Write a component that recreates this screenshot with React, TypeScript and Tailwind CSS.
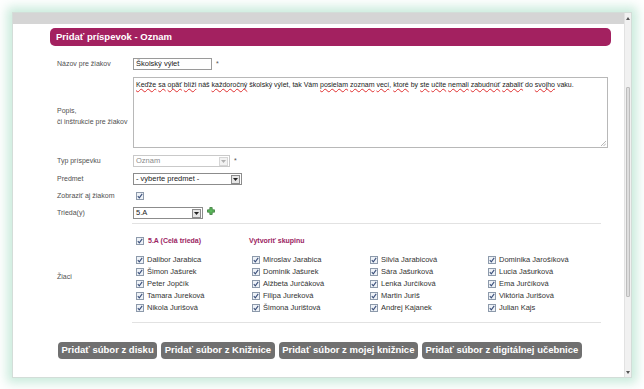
import React from 'react';

const font = { fontFamily: '"Liberation Sans", Arial, sans-serif' };

// Malý zaškrtnutý checkbox
function Check() {
  return (
    <svg width="8" height="8" viewBox="0 0 8 8" className="shrink-0">
      <rect x="0.5" y="0.5" width="7" height="7" fill="#eef2f7" stroke="#8d9aab" />
      <path d="M1.8 4.2 L3.3 5.8 L6.2 1.9" fill="none" stroke="#3b4f7a" strokeWidth="1.1" />
    </svg>
  );
}

function SelectBox({ value, width, disabled }: { value: string; width: string; disabled?: boolean }) {
  return (
    <div
      className={`${width} h-[12px] flex items-center justify-between border bg-white ${
        disabled ? 'border-[#c9c9c9] text-[#8a8a8a]' : 'border-[#8c8c8c] text-[#222]'
      }`}
    >
      <span className="pl-[2px] text-[7.5px] leading-none">{value}</span>
      <span
        className={`w-[9px] h-[9px] mr-[1px] flex items-center justify-center border ${
          disabled ? 'border-[#d6d6d6] bg-[#f2f2f2]' : 'border-[#8c8c8c] bg-[#e6e6e6]'
        }`}
      >
        <svg width="5" height="3" viewBox="0 0 5 3">
          <path d="M0 0 L5 0 L2.5 3 Z" fill={disabled ? '#b0b0b0' : '#222'} />
        </svg>
      </span>
    </div>
  );
}

// Slovo podčiarknuté kontrolou pravopisu
function Sp({ children }: { children: React.ReactNode }) {
  return <span className="underline decoration-wavy decoration-[#e03030] decoration-[0.5px] underline-offset-[1px]">{children}</span>;
}

const students = [
  ['Dalibor Jarabica', 'Miroslav Jarabica', 'Silvia Jarabicová', 'Dominika Jarošíková'],
  ['Šimon Jašurek', 'Dominik Jašurek', 'Sára Jašurková', 'Lucia Jašurková'],
  ['Peter Jopčík', 'Alžbeta Jurčáková', 'Lenka Jurčíková', 'Ema Jurčíková'],
  ['Tamara Jureková', 'Filipa Jureková', 'Martin Juriš', 'Viktória Jurišová'],
  ['Nikola Jurišová', 'Šimona Jurištová', 'Andrej Kajanek', 'Julian Kajs'],
];

const buttons = [
  'Pridať súbor z disku',
  'Pridať súbor z Knižnice',
  'Pridať súbor z mojej knižnice',
  'Pridať súbor z digitálnej učebnice',
];

export default function App() {
  return (
    <div className="w-[644px] h-[389px] bg-white pt-[12px] pl-[12px]" style={font}>
      <div className="w-[620px] h-[366px] flex bg-white border border-[#d3ddd8] shadow-[0_0_10px_5px_rgba(150,215,185,0.5)]">
        {/* Obsah */}
        <div className="flex-1 flex flex-col">
          <div className="h-[11px] bg-[#d5d5d5]" />

          <div className="pl-[37px] pr-[13px] pt-[4px]">
            <div className="h-[18px] rounded-[5px] bg-[#a32160] flex items-center pl-[6px]">
              <span className="text-white font-bold text-[9.5px]">Pridať príspevok - Oznam</span>
            </div>
          </div>

          <div className="pl-[44px] pr-[16px] text-[7px] text-[#505050]">
            {/* Názov */}
            <div className="flex items-center h-[12px] mt-[12px]">
              <div className="w-[76px]">Názov pre žiakov</div>
              <div className="w-[79px] h-[12px] border border-[#9a9a9a] flex items-center pl-[2px] text-[#222] text-[7.5px]">
                Školský výlet
              </div>
              <span className="ml-[4px] text-[#555]">*</span>
            </div>

            {/* Popis */}
            <div className="flex items-center h-[71px] mt-[7px]">
              <div className="w-[76px] leading-[11px] pt-[6px]">
                Popis,
                <br />
                či inštrukcie pre žiakov
              </div>
              <div className="relative w-[475px] h-[71px] border border-[#b8b8b8] px-[2px] pt-[2px] text-[#222] leading-[10px]">
                <Sp>Keďže</Sp> <Sp>sa</Sp> <Sp>opäť</Sp> <Sp>blíži</Sp> náš <Sp>každoročný</Sp> školský výlet, tak Vám{' '}
                <Sp>posielam</Sp> <Sp>zoznam</Sp> <Sp>vecí</Sp>, <Sp>ktoré</Sp> by <Sp>ste</Sp> <Sp>učite</Sp>{' '}
                <Sp>nemali</Sp> <Sp>zabudnúť</Sp> <Sp>zabaliť</Sp> do <Sp>svojho</Sp> vaku.
                <svg width="6" height="6" viewBox="0 0 6 6" className="absolute right-[1px] bottom-[1px]">
                  <path d="M6 1 L1 6 M6 3.5 L3.5 6" stroke="#9a9a9a" strokeWidth="0.7" />
                </svg>
              </div>
            </div>

            {/* Typ príspevku */}
            <div className="flex items-center h-[12px] mt-[7px]">
              <div className="w-[76px]">Typ príspevku</div>
              <SelectBox value="Oznam" width="w-[97px]" disabled />
              <span className="ml-[4px] text-[#555]">*</span>
            </div>

            {/* Predmet */}
            <div className="flex items-center h-[12px] mt-[6px]">
              <div className="w-[76px]">Predmet</div>
              <SelectBox value="- vyberte predmet -" width="w-[109px]" />
            </div>

            {/* Zobraziť */}
            <div className="flex items-center h-[12px] mt-[5px]">
              <div className="w-[76px]">Zobraziť aj žiakom</div>
              <div className="pl-[3px]">
                <Check />
              </div>
            </div>

            {/* Trieda */}
            <div className="flex items-center h-[12px] mt-[5px]">
              <div className="w-[76px]">Trieda(y)</div>
              <SelectBox value="5.A" width="w-[70px]" />
              <svg width="8" height="8" viewBox="0 0 8 8" className="ml-[4px] -mt-[4px]">
                <path
                  d="M2.8 0.5 H5.2 V2.8 H7.5 V5.2 H5.2 V7.5 H2.8 V5.2 H0.5 V2.8 H2.8 Z"
                  fill="#5cb85c"
                  stroke="#2f6f2f"
                  strokeWidth="0.7"
                />
              </svg>
            </div>

            <div className="ml-[75px] w-[469px] h-px bg-[#e2e2e2] mt-[4px]" />

            {/* Žiaci */}
            <div className="flex">
              <div className="w-[76px] pt-[48px]">Žiaci</div>
              <div className="flex-1 pt-[11px] text-[7.5px]">
                <div className="grid grid-cols-[116px_118px_118px_1fr] h-[12px] items-center font-bold text-[7px] text-[#9b2462]">
                  <div className="flex items-center gap-[4px] pl-[3px]">
                    <Check />
                    <span>5.A (Celá trieda)</span>
                  </div>
                  <div>Vytvoriť skupinu</div>
                </div>
                <div className="mt-[7px] grid grid-cols-[116px_118px_118px_1fr] text-[#333]">
                  {students.map((row) =>
                    row.map((name) => (
                      <div key={name} className="h-[12px] flex items-center gap-[3px] pl-[3px]">
                        <Check />
                        <span>{name}</span>
                      </div>
                    ))
                  )}
                </div>
              </div>
            </div>

            <div className="ml-[75px] w-[469px] h-px bg-[#e2e2e2] mt-[8px]" />

            {/* Tlačidlá */}
            <div className="flex gap-[4px] mt-[19px] pl-[1px]">
              {buttons.map((b) => (
                <div
                  key={b}
                  className="h-[17px] px-[3.5px] rounded-[4px] bg-[#707070] flex items-center text-white font-bold text-[9.5px]"
                >
                  {b}
                </div>
              ))}
            </div>
          </div>
        </div>

        {/* Scrollbar */}
        <div className="w-[10px] flex flex-col bg-[#f1f1f1] border-l border-[#e2e2e2]">
          <div className="h-[10px] flex items-center justify-center">
            <svg width="4" height="3" viewBox="0 0 4 3">
              <path d="M0 3 L4 3 L2 0 Z" fill="#555" />
            </svg>
          </div>
          <div className="flex-1 px-[1px]">
            <div className="mt-[64px] h-[210px] rounded-[1px] border border-[#bdbdbd] bg-[#dedede]" />
          </div>
          <div className="h-[10px] flex items-center justify-center">
            <svg width="4" height="3" viewBox="0 0 4 3">
              <path d="M0 0 L4 0 L2 3 Z" fill="#555" />
            </svg>
          </div>
        </div>
      </div>
    </div>
  );
}
